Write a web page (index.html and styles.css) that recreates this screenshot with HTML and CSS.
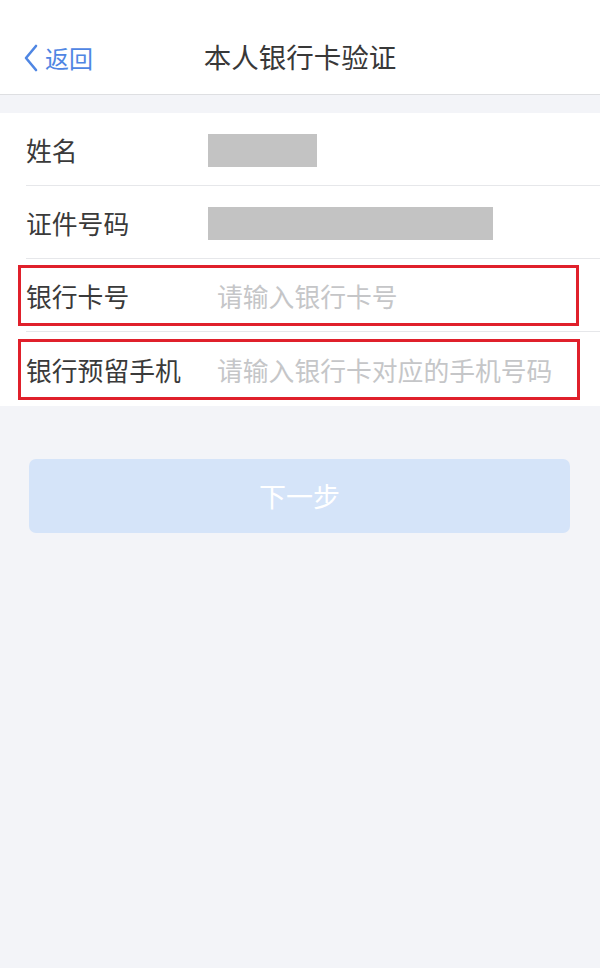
FILE: index.html
```html
<!DOCTYPE html>
<html lang="zh-CN">
<head>
<meta charset="utf-8">
<title>本人银行卡验证</title>
<link rel="stylesheet" href="styles.css">
</head>
<body>
<header class="nav">
  <a class="back">
    <svg class="chev" width="16" height="28" viewBox="0 0 16 28"><path d="M13 2 L3 14 L13 26" fill="none" stroke="#4f86e3" stroke-width="2.6" stroke-linecap="round" stroke-linejoin="round"/></svg>
    <span>返回</span>
  </a>
  <h1 class="title">本人银行卡验证</h1>
</header>
<section class="form">
  <div class="row">
    <span class="label">姓名</span>
    <span class="mask mask-name"></span>
  </div>
  <div class="row">
    <span class="label">证件号码</span>
    <span class="mask mask-id"></span>
  </div>
  <div class="row">
    <span class="label">银行卡号</span>
    <span class="ph">请输入银行卡号</span>
    <span class="mark mark-1"></span>
  </div>
  <div class="row last">
    <span class="label">银行预留手机</span>
    <span class="ph">请输入银行卡对应的手机号码</span>
    <span class="mark mark-2"></span>
  </div>
</section>
<div class="actions">
  <button class="next">下一步</button>
</div>
</body>
</html>
```
FILE: styles.css
```css
html, body {
  margin: 0;
  padding: 0;
  background: #f3f4f8;
  font-family: "Noto Sans CJK SC", "Noto Sans", sans-serif;
  height: 968px;
  overflow: hidden;
}
.nav {
  height: 94px;
  background: #fff;
  border-bottom: 1px solid #dedfe2;
  position: relative;
  display: flex;
  align-items: center;
  justify-content: center;
  margin-bottom: 18px;
}
.back {
  position: absolute;
  left: 23px;
  top: 44px;
  display: flex;
  align-items: center;
  color: #4f86e3;
  font-size: 24px;
  line-height: 28px;
}
.back span { margin-left: 6px; }
.chev { display: block; }
.title {
  margin: 0;
  padding-top: 18px;
  font-size: 27.5px;
  font-weight: 400;
  color: #383838;
  letter-spacing: 0;
}
.form {
  background: #fff;
}
.row {
  position: relative;
  height: 73px;
  display: flex;
  align-items: center;
  padding-left: 26px;
  box-sizing: border-box;
}
.row::after {
  content: "";
  position: absolute;
  left: 26px;
  right: 0;
  bottom: 0;
  height: 1px;
  background: #e6e7ea;
}
.row.last { height: 74px; }
.row.last::after { display: none; }
.label {
  width: 182px;
  font-size: 25.8px;
  color: #3a3a3a;
  flex-shrink: 0;
}
.mask {
  display: block;
  height: 33px;
  margin-top: 2px;
  background: #c3c3c3;
}
.mask-name { width: 109px; }
.mask-id { width: 285px; }
.ph {
  margin-left: 9px;
  font-size: 25.8px;
  color: #c5c6c8;
}
.mark {
  position: absolute;
  left: 18px;
  width: 561px;
  height: 61px;
  box-sizing: border-box;
  border: 3px solid #e0202b;
}
.mark-1 { top: 6px; }
.mark-2 { top: 7px; width: 562px; }
.actions {
  padding: 53px 30px 0 29px;
}
.next {
  display: block;
  width: 541px;
  height: 74px;
  border: 0;
  border-radius: 7px;
  background: #d5e4f9;
  color: #fff;
  font-family: "Noto Sans CJK SC", "Noto Sans", sans-serif;
  font-size: 27px;
  padding: 0 0 2px;
}
```
